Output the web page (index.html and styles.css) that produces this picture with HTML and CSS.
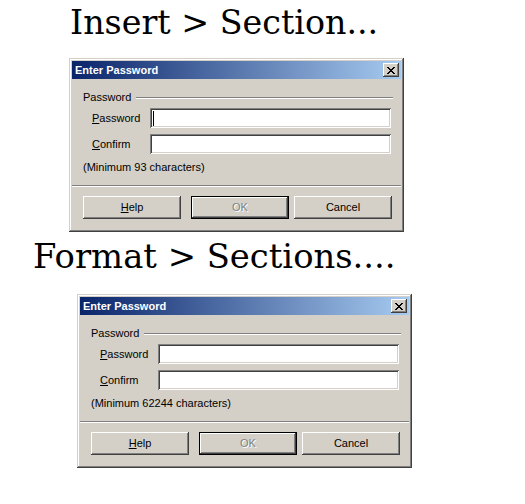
FILE: index.html
```html
<!DOCTYPE html>
<html lang="en">
<head>
<meta charset="utf-8">
<title>Enter Password</title>
<link rel="stylesheet" href="styles.css">
</head>
<body>
<div class="page">
  <section class="shot shot-1">
    <h1 class="caption">Insert &gt; Section...</h1>
    <div class="dialog">
      <div class="titlebar">
        <span class="title">Enter Password</span>
        <span class="close"><svg width="8" height="7" viewBox="0 0 8 7" shape-rendering="crispEdges"><path d="M0 0h2v1H0zM6 0h2v1H6zM1 1h2v1H1zM5 1h2v1H5zM2 2h4v1H2zM3 3h2v1H3zM2 4h4v1H2zM1 5h2v1H1zM5 5h2v1H5zM0 6h2v1H0zM6 6h2v1H6z" fill="#000"/></svg></span>
      </div>
      <div class="body">
        <div class="group-head"><span class="group-label">Password</span><span class="etch"></span></div>
        <div class="row"><span class="label"><u>P</u>assword</span><div class="field"><span class="caret"></span></div></div>
        <div class="row"><span class="label"><u>C</u>onfirm</span><div class="field"></div></div>
        <p class="note">(Minimum 93 characters)</p>
      </div>
      <div class="sep"></div>
      <div class="buttons">
        <div class="btn"><u>H</u>elp</div>
        <div class="btn btn-default btn-disabled">OK</div>
        <div class="btn">Cancel</div>
      </div>
    </div>
  </section>
  <section class="shot shot-2">
    <h1 class="caption">Format &gt; Sections....</h1>
    <div class="dialog">
      <div class="titlebar">
        <span class="title">Enter Password</span>
        <span class="close"><svg width="8" height="7" viewBox="0 0 8 7" shape-rendering="crispEdges"><path d="M0 0h2v1H0zM6 0h2v1H6zM1 1h2v1H1zM5 1h2v1H5zM2 2h4v1H2zM3 3h2v1H3zM2 4h4v1H2zM1 5h2v1H1zM5 5h2v1H5zM0 6h2v1H0zM6 6h2v1H6z" fill="#000"/></svg></span>
      </div>
      <div class="body">
        <div class="group-head"><span class="group-label">Password</span><span class="etch"></span></div>
        <div class="row"><span class="label"><u>P</u>assword</span><div class="field"></div></div>
        <div class="row"><span class="label"><u>C</u>onfirm</span><div class="field"></div></div>
        <p class="note">(Minimum 62244 characters)</p>
      </div>
      <div class="sep"></div>
      <div class="buttons">
        <div class="btn"><u>H</u>elp</div>
        <div class="btn btn-default btn-disabled">OK</div>
        <div class="btn">Cancel</div>
      </div>
    </div>
  </section>
</div>
</body>
</html>
```

FILE: styles.css
```css
* { box-sizing: border-box; }
html, body { margin: 0; padding: 0; background: #fff; }

.page { width: 525px; height: 504px; }

.caption {
  margin: 0;
  font-family: "DejaVu Serif", serif;
  font-weight: normal;
  font-size: 33.3px;
  line-height: 40px;
  color: #000;
  padding-top: 3px;
  white-space: nowrap;
}
.shot-1 .caption { padding-left: 70px; }
.shot-2 .caption { padding-left: 33px; margin-top: 2px; font-size: 33.8px; }

.dialog {
  width: 335px;
  height: 174px;
  background: #d4d0c8;
  padding: 3px;
  box-shadow: inset -1px -1px #404040, inset 1px 1px #d4d0c8, inset -2px -2px #808080, inset 2px 2px #fff;
  font-family: "Liberation Sans", Arial, sans-serif;
  font-size: 11px;
  color: #000;
  display: flex;
  flex-direction: column;
}
.shot-1 .dialog { margin: 15px 0 0 69px; }
.shot-2 .dialog { margin: 17px 0 0 77px; }

.titlebar {
  height: 18px;
  background: linear-gradient(to right, #0a246a, #a6caf0);
  display: flex;
  align-items: center;
  justify-content: space-between;
  padding: 0 2px 0 3px;
}
.title {
  color: #fff;
  font-weight: bold;
  font-size: 11px;
  line-height: 13px;
}
.close {
  width: 16px;
  height: 14px;
  background: #d4d0c8;
  box-shadow: inset -1px -1px #404040, inset 1px 1px #fff, inset -2px -2px #808080;
  display: flex;
  align-items: center;
  justify-content: center;
}
.close svg { display: block; }

.body {
  padding: 12px 8px 0 11px;
}
.group-head {
  display: flex;
  align-items: center;
  height: 13px;
  line-height: 13px;
}
.group-label { margin-right: 5px; }
.etch {
  flex: 1;
  height: 2px;
  border-top: 1px solid #808080;
  border-bottom: 1px solid #fff;
}

.row {
  display: flex;
  align-items: center;
  height: 20px;
  margin-top: 6px;
}
.group-head + .row { margin-top: 4px; }
.label {
  width: 67px;
  padding-left: 9px;
  line-height: 13px;
}
.label u, .btn u { text-decoration: underline; text-underline-offset: 1px; }
.field {
  flex: 1;
  height: 20px;
  margin-right: 2px;
  background: #fff;
  box-shadow: inset 1px 1px #808080, inset -1px -1px #fff, inset 2px 2px #404040, inset -2px -2px #d4d0c8;
  position: relative;
}
.caret {
  position: absolute;
  left: 3px;
  top: 3px;
  width: 1px;
  height: 15px;
  background: #000;
}

.note {
  margin: 7px 0 0;
  line-height: 13px;
}

.sep {
  margin-top: 11px;
  height: 2px;
  border-top: 1px solid #808080;
  border-bottom: 1px solid #fff;
}

.buttons {
  display: flex;
  padding: 9px 0 0 11px;
  gap: 10px;
}
.btn {
  width: 98px;
  height: 23px;
  background: #d4d0c8;
  box-shadow: inset -1px -1px #404040, inset 1px 1px #fff, inset -2px -2px #808080, inset 2px 2px #d4d0c8;
  display: flex;
  align-items: center;
  justify-content: center;
  line-height: 13px;
}
.btn-default {
  border: 1px solid #000;
  box-shadow: inset -1px -1px #404040, inset 1px 1px #fff, inset -2px -2px #808080;
}
.btn-default + .btn { margin-left: -5px; }
.btn-disabled { color: #808080; text-shadow: 1px 1px #fff; }
```
